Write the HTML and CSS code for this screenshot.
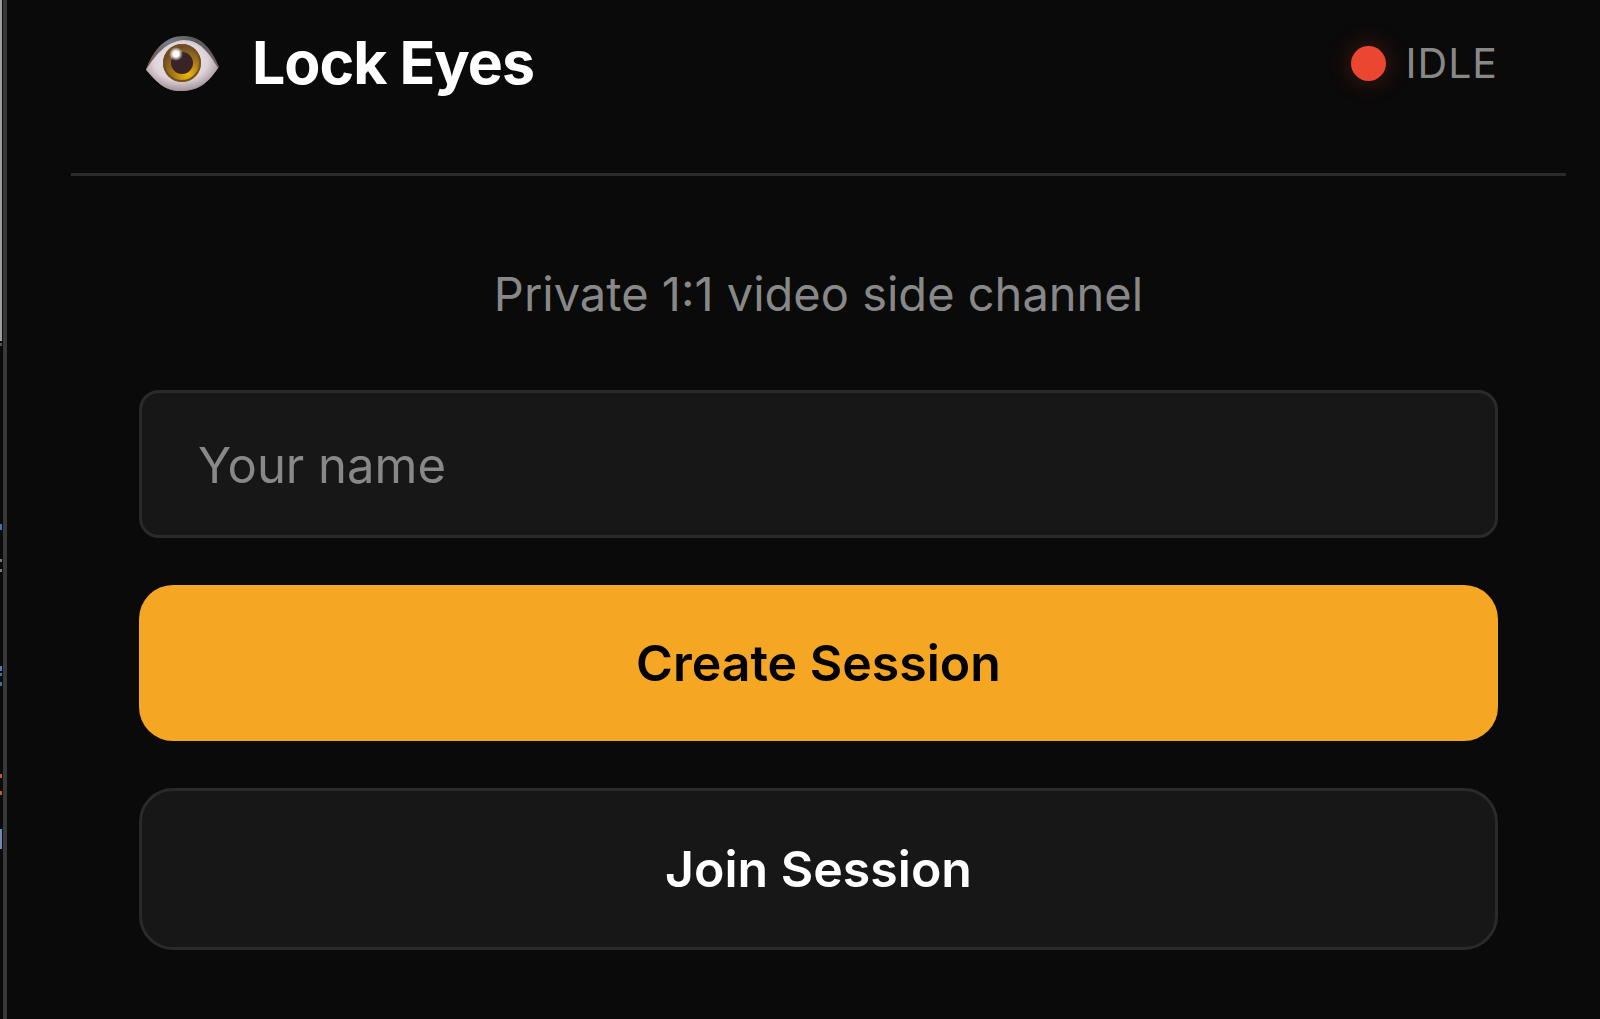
FILE: index.html
```
<!DOCTYPE html>
<html lang="en">
<head>
  <meta charset="UTF-8">
  <meta name="viewport" content="width=device-width, initial-scale=1.0">
  <title>Lock Eyes</title>
  <link rel="stylesheet" href="styles.css">
</head>
<body>
  <!-- Sliver of the page next to the panel -->
  <div class="page-edge">
    <svg width="2" height="1019" aria-hidden="true">
      <rect width="2" height="341" fill="#a0a0a0"/>
      <rect y="343" width="2" height="3" fill="#555"/>
      <rect y="524" width="2" height="6" fill="#456eb4"/>
      <rect y="559" width="2" height="3" fill="#777"/>
      <rect y="569" width="2" height="3" fill="#777"/>
      <rect y="666" width="2" height="5" fill="#5577b8"/>
      <rect y="673" width="2" height="3" fill="#417299"/>
      <rect y="682" width="2" height="4" fill="#417299"/>
      <rect y="774" width="2" height="4" fill="#b95d33"/>
      <rect y="791" width="2" height="4" fill="#b95d33"/>
      <rect y="829" width="2" height="20" fill="#7287b8"/>
    </svg>
  </div>

  <div class="panel">
    <header class="header">
      <div class="brand">
        <svg class="eye" viewBox="0 0 76 60" aria-hidden="true">
          <defs>
            <linearGradient id="lid" x1="0" y1="0" x2="1" y2="0">
              <stop offset="0" stop-color="#6b5145"/>
              <stop offset="0.3" stop-color="#777b84"/>
              <stop offset="0.7" stop-color="#59595c"/>
              <stop offset="1" stop-color="#6f5f60"/>
            </linearGradient>
            <radialGradient id="white" cx="0.48" cy="0.42" r="0.62">
              <stop offset="0" stop-color="#f5eff3"/>
              <stop offset="0.6" stop-color="#dfd3da"/>
              <stop offset="1" stop-color="#94858a"/>
            </radialGradient>
            <radialGradient id="iris" cx="0.65" cy="0.8" r="0.75">
              <stop offset="0" stop-color="#edb908"/>
              <stop offset="0.5" stop-color="#a97913"/>
              <stop offset="1" stop-color="#6b4a2c"/>
            </radialGradient>
            <radialGradient id="glint">
              <stop offset="0.4" stop-color="#fff"/>
              <stop offset="1" stop-color="#fff" stop-opacity="0"/>
            </radialGradient>
          </defs>
          <path d="M2 36C10 16 21 3 40 3c18 0 28 14 35 31C64 49 56 58 36 58 20 58 12 48 2 36z" fill="url(#lid)"/>
          <path d="M2 37C11 23 22 8 40 7c16 0 25 13 34 28C64 50 55 58 36 58 20 58 12 48 2 37z" fill="url(#white)"/>
          <circle cx="38" cy="30" r="19" fill="url(#iris)"/>
          <circle cx="38" cy="30" r="18" fill="none" stroke="#725221" stroke-width="2"/>
          <circle cx="38" cy="30" r="11" fill="#3a2327"/>
          <circle cx="32" cy="21" r="7" fill="url(#glint)"/>
        </svg>
        <h1 class="title">Lock Eyes</h1>
      </div>
      <div class="status">
        <span class="status-dot"></span>
        <span class="status-text">IDLE</span>
      </div>
    </header>

    <main class="content">
      <p class="tagline">Private 1:1 video side channel</p>
      <input class="name-input" type="text" placeholder="Your name" aria-label="Your name">
      <button class="btn btn-primary" type="button">Create Session</button>
      <button class="btn btn-secondary" type="button">Join Session</button>
    </main>
  </div>
</body>
</html>
```

FILE: styles.css
```
:root {
  --bg: #0a0a0a;
  --surface: #171717;
  --border: #2a2a2a;
  --text: #fff;
  --muted: #888;
  --accent: #f5a623;
  --idle: #ea4630;
}

* {
  box-sizing: border-box;
  margin: 0;
  padding: 0;
}

body {
  display: flex;
  min-height: 100vh;
  background: var(--bg);
  color: var(--text);
  font-family: Inter, "Liberation Sans", sans-serif;
}

.page-edge {
  width: 3px;
  flex-shrink: 0;
}

.page-edge svg {
  display: block;
}

.panel {
  flex: 1;
  border-left: 4px solid #383838;
  padding: 0 34px 0 64px;
}

.header {
  display: flex;
  justify-content: space-between;
  align-items: center;
  padding: 27px 68px 74px;
  border-bottom: 3px solid var(--border);
}

.brand {
  display: flex;
  align-items: center;
  gap: 32px;
}

.eye {
  width: 76px;
  height: 60px;
  margin-left: 5px;
}

.title {
  font-size: 59px;
  font-weight: 700;
  line-height: 72px;
  letter-spacing: -1px;
}

.status {
  display: flex;
  align-items: center;
  gap: 20px;
}

.status-dot {
  width: 35px;
  height: 35px;
  border-radius: 50%;
  background: var(--idle);
  box-shadow: 0 0 24px rgba(234, 70, 48, 0.3);
}

.status-text {
  font-size: 41px;
  line-height: 50px;
  letter-spacing: 1px;
  color: var(--muted);
}

.content {
  display: flex;
  flex-direction: column;
  gap: 47px;
  padding: 89px 68px 68px;
}

.tagline {
  margin-bottom: 20px;
  font-size: 47px;
  line-height: 58px;
  text-align: center;
  color: var(--muted);
}

.name-input {
  width: 100%;
  padding: 43px 56px 39px;
  border: 3px solid var(--border);
  border-radius: 20px;
  background: var(--surface);
  color: var(--text);
  font-family: inherit;
  font-size: 49px;
  line-height: 60px;
}

.name-input::placeholder {
  color: var(--muted);
}

.btn {
  padding: 48px;
  border: none;
  border-radius: 34px;
  font-family: inherit;
  font-size: 50px;
  font-weight: 600;
  line-height: 60px;
  cursor: pointer;
}

.btn-primary {
  background: var(--accent);
  color: #000;
}

.btn-secondary {
  border: 3px solid var(--border);
  background: var(--surface);
  color: var(--text);
}
```
